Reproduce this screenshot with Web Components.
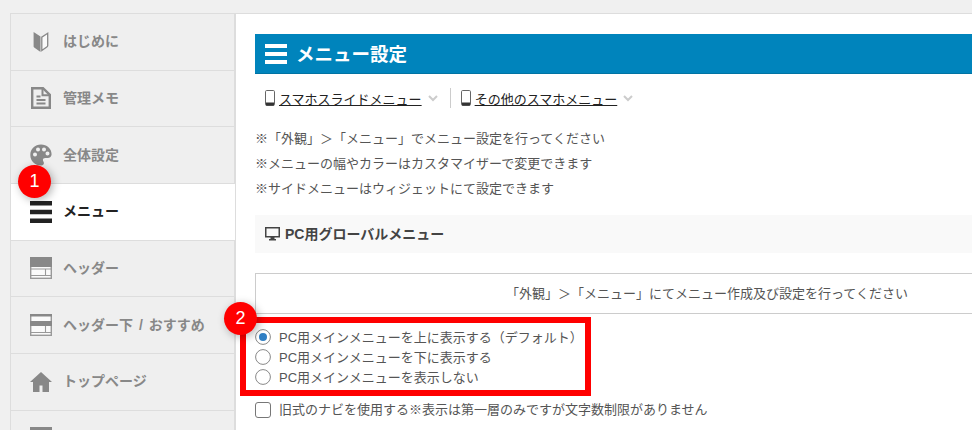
<!DOCTYPE html>
<html lang="ja">
<head>
<meta charset="utf-8">
<title>メニュー設定</title>
<style>
  html, body { margin: 0; height: 430px; overflow: hidden; background: #f0f0f0; }
  body { font-family: "Liberation Sans", "Noto Sans CJK JP", sans-serif; font-size: 13px; color: #555; }
</style>
</head>
<body>
<settings-page>
  <side-nav slot="nav">
    <nav-item icon="beginner">はじめに</nav-item>
    <nav-item icon="memo">管理メモ</nav-item>
    <nav-item icon="palette">全体設定</nav-item>
    <nav-item icon="bars" active>メニュー</nav-item>
    <nav-item icon="header">ヘッダー</nav-item>
    <nav-item icon="header2">ヘッダー下 / おすすめ</nav-item>
    <nav-item icon="home">トップページ</nav-item>
    <nav-item icon="header"></nav-item>
  </side-nav>
  <title-bar slot="main">メニュー設定</title-bar>
  <tab-row slot="main">
    <tab-link>スマホスライドメニュー</tab-link>
    <tab-link>その他のスマホメニュー</tab-link>
  </tab-row>
  <note-list slot="main">
    <div>※「外観」＞「メニュー」でメニュー設定を行ってください</div>
    <div>※メニューの幅やカラーはカスタマイザーで変更できます</div>
    <div>※サイドメニューはウィジェットにて設定できます</div>
  </note-list>
  <section-head slot="main">PC用グローバルメニュー</section-head>
  <info-box slot="main">「外観」＞「メニュー」にてメニュー作成及び設定を行ってください</info-box>
  <option-group slot="main">
    <radio-row checked>PC用メインメニューを上に表示する（デフォルト）</radio-row>
    <radio-row>PC用メインメニューを下に表示する</radio-row>
    <radio-row>PC用メインメニューを表示しない</radio-row>
  </option-group>
  <check-row slot="main">旧式のナビを使用する※表示は第一層のみですが文字数制限がありません</check-row>
  <step-badge slot="over" style="left:18px;top:165px">1</step-badge>
  <step-badge slot="over" style="left:224px;top:302px">2</step-badge>
  <mark-frame slot="over" style="left:240px;top:317px;width:351px;height:79px"></mark-frame>
</settings-page>

<script>
  const ICONS = {
    beginner: '<svg width="16" height="22" viewBox="0 0 16 22"><path d="M.6 1 7.500 5.500V21L1.200 16.600A1.400 1.400 0 0 1 .6 15.500z" fill="#888"/><path d="M14.700 2.300 8.800 6.200V19.500l5.300-3.700a1.400 1.400 0 0 0 .6-1z" fill="#fafafa" stroke="#888" stroke-width="1.300"/></svg>',
    memo: '<svg width="20" height="22" viewBox="0 0 20 22"><path d="M1.200 1.200H12l6.800 6.600v13H1.200z" fill="none" stroke="#888" stroke-width="2.400"/><path d="M11.500 1.200v7h7" fill="none" stroke="#888" stroke-width="2"/><path d="M5.500 9.500h4M5.500 13h9M5.500 16.500h9" stroke="#888" stroke-width="2"/></svg>',
    palette: '<svg width="22" height="22" viewBox="0 0 22 22"><path fill="#888" fill-rule="evenodd" d="M11 .5C5 .5.3 5 .3 11S5 21.500 11 21.500c1.900 0 2.900-1.200 2.900-2.500 0-1.500-1-1.900-1-3.100 0-1.200 1-1.900 2.300-1.900h2.500c2.200 0 3.900-1.500 3.900-3.800C21.600 4.500 16.800.5 11 .5zM5 12.500a2 2 0 1 1 0-4 2 2 0 0 1 0 4zm3-5a2 2 0 1 1 0-4 2 2 0 0 1 0 4zm6 0a2 2 0 1 1 0-4 2 2 0 0 1 0 4zm3.500 4a2 2 0 1 1 0-4 2 2 0 0 1 0 4z"/></svg>',
    bars: '<svg width="22" height="22" viewBox="0 0 22 22"><path d="M0 0h22v4.500H0zM0 8.700h22v4.500H0zM0 17.500h22V22H0z" fill="#222"/></svg>',
    header: '<svg width="22" height="22" viewBox="0 0 22 22"><rect x=".7" y=".7" width="20.600" height="20.600" fill="#fafafa" stroke="#999" stroke-width="1.400"/><rect width="22" height="10" fill="#888"/><path d="M1 12h20M1 18.500h20M15.500 12v6.500" stroke="#999" stroke-width="1.100"/></svg>',
    header2: '<svg width="22" height="22" viewBox="0 0 22 22"><rect x=".7" y=".7" width="20.600" height="20.600" fill="#fafafa" stroke="#999" stroke-width="1.400"/><rect width="22" height="2.500" fill="#888"/><rect y="7" width="22" height="5" fill="#888"/><path d="M1 18.500h20M15.500 12v6.500" stroke="#999" stroke-width="1.100"/></svg>',
    home: '<svg width="22" height="20" viewBox="0 0 22 20"><path fill="#888" fill-rule="evenodd" d="M11 0 22 10h-3v10H3V10H0zM9.500 13.500V20h3v-6.500z"/></svg>'
  };

  // shadow root from a css + html pair, saves some typing below
  function simple(tag, css, html) {
    customElements.define(tag, class extends HTMLElement {
      constructor() {
        super();
        this.attachShadow({ mode: 'open' }).innerHTML = `<style>${css}</style>${html}`;
      }
    });
  }

  class SettingsPage extends HTMLElement {
    constructor() {
      super();
      this.attachShadow({ mode: 'open' }).innerHTML = `
        <style>
          :host { display: block; position: relative; height: 430px; overflow: hidden; }
          .wrap { display: flex; padding: 13px 0 0 10px; align-items: stretch; }
          main { flex: 1; min-width: 0; background: #fff; height: 430px;
                 border-top: 1px solid #ddd; padding: 20px 0 0 19px; box-sizing: border-box; }
        </style>
        <div class="wrap">
          <slot name="nav"></slot>
          <main><slot name="main"></slot></main>
        </div>
        <slot name="over"></slot>`;
    }
  }
  customElements.define('settings-page', SettingsPage);

  simple('side-nav', `:host { display: block; width: 226px; box-sizing: border-box; height: 430px;
      border-left: 1px solid #ddd; border-top: 1px solid #ddd; border-right: 2px solid #ddd; }`, '<slot></slot>');

  class NavItem extends HTMLElement {
    constructor() {
      super();
      const active = this.hasAttribute('active');
      this.attachShadow({ mode: 'open' }).innerHTML = `
        <style>
          :host { display: flex; align-items: center; box-sizing: border-box; height: 56.67px;
                  border-bottom: 1px solid #ddd;
                  background: ${active ? '#fff' : '#efefef'}; padding-left: 19px; ${active ? 'margin-right: -1px;' : ''}
                  font: bold 14px "Liberation Sans", "Noto Sans CJK JP", sans-serif; word-spacing: 2px;
                  color: ${active ? '#222' : '#888'}; }
          .ico { width: 22px; height: 22px; display: flex; align-items: center; justify-content: center; margin-right: 11px; }
          .txt { padding-bottom: 3px; }
          svg { display: block; }
        </style>
        <span class="ico">${ICONS[this.getAttribute('icon')] || ''}</span><span class="txt"><slot></slot></span>`;
    }
  }
  customElements.define('nav-item', NavItem);

  simple('title-bar', `:host { display: flex; align-items: center; height: 40px; background: #0084bc;
      border-bottom: 1px solid #0073a3; box-sizing: border-box; padding-left: 10px; color: #fff;
      font-weight: bold; font-size: 18.5px; }
      svg { margin-right: 9px; }
      span { padding-bottom: 2px; }`,
    '<svg width="22" height="20" viewBox="0 0 22 20"><path d="M0 0h22v4H0zM0 8h22v4H0zM0 16h22v4H0z" fill="#fff"/></svg><span><slot></slot></span>');

  simple('tab-row', `:host { display: flex; align-items: center; height: 20px; margin-top: 14px; padding-left: 10px; }
      ::slotted(tab-link:last-child) { border-left: 1px solid #ccc; margin-left: 12px; padding-left: 10px; }`, '<slot></slot>');

  simple('tab-link', `:host { display: flex; align-items: center; height: 20px; font-size: 13px; color: #333; }
      a { text-decoration: underline; color: #222; margin: 0 6px 0 4px; }
      svg { display: block; }`,
    `<svg width="10" height="16" viewBox="0 0 10 16"><rect x=".5" y=".5" width="9" height="15" rx="1.200" fill="none" stroke="#666" stroke-width="1"/><rect x="1" y="12.500" width="8" height="3" fill="#333"/></svg>
     <a><slot></slot></a>
     <svg width="10" height="7" viewBox="0 0 10 7"><path d="M1 1l4 4 4-4" fill="none" stroke="#ccc" stroke-width="2"/></svg>`);

  simple('note-list', `:host { display: block; margin-top: 18px; font-size: 13px; line-height: 25px; color: #555; }`, '<slot></slot>');

  simple('section-head', `:host { display: flex; align-items: center; height: 38px; margin-top: 14px; padding-left: 10px;
      background: #f9f9f9; font-weight: bold; font-size: 14px; color: #444; }
      svg { margin-right: 5px; }
      span { padding-bottom: 2px; }`,
    '<svg width="15" height="14" viewBox="0 0 15 14"><path fill="#444" fill-rule="evenodd" d="M0 0h15v10.500H9.500V12H11v1.500H4V12h1.500v-1.500H0zM1.500 1.500V9h12V1.500z"/></svg><span><slot></slot></span>');

  simple('info-box', `:host { display: block; margin-top: 20px; height: 41px; box-sizing: border-box;
      border: 1px solid #ccc; border-right: 0; padding-left: 250px; line-height: 39px; font-size: 13px; color: #555; }`, '<slot></slot>');

  simple('option-group', `:host { display: block; margin-top: 13px; }`, '<slot></slot>');

  class RadioRow extends HTMLElement {
    constructor() {
      super();
      const dot = this.hasAttribute('checked') ? '<circle cx="8" cy="8" r="4" fill="#2f7fc4"/>' : '';
      this.attachShadow({ mode: 'open' }).innerHTML = `
        <style>
          :host { display: flex; align-items: center; height: 20px; font-size: 13px; color: #555; }
          svg { margin-right: 8px; flex: none; }
          span { padding-bottom: 2px; }
        </style>
        <svg width="16" height="16" viewBox="0 0 16 16"><circle cx="8" cy="8" r="7.400" fill="#fff" stroke="#888" stroke-width="1"/>${dot}</svg><span><slot></slot></span>`;
    }
  }
  customElements.define('radio-row', RadioRow);

  simple('check-row', `:host { display: flex; align-items: center; height: 20px; margin-top: 13px; font-size: 13px; color: #555; }
      svg { margin-right: 8px; flex: none; }
      span { padding-bottom: 3px; }`,
    '<svg width="16" height="16" viewBox="0 0 16 16"><rect x=".5" y=".5" width="15" height="15" rx="2.500" fill="#fff" stroke="#777"/></svg><span><slot></slot></span>');

  simple('step-badge', `:host { position: absolute; width: 33px; height: 33px; border-radius: 50%; background: #f00; color: #fff;
      display: flex; align-items: center; justify-content: center; font-size: 18px; font-family: "Liberation Sans", sans-serif;
      box-shadow: 2px 2px 8px rgba(0,0,0,.3); z-index: 2; }`, '<slot></slot>');

  simple('mark-frame', `:host { position: absolute; box-sizing: border-box; border: 6px solid #f00; z-index: 1; }`, '');
</script>
</body>
</html>
